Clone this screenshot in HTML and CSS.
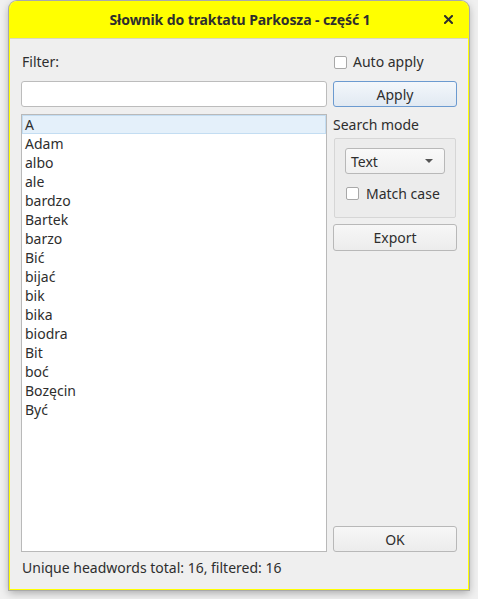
FILE: index.html
```html
<!DOCTYPE html>
<html lang="pl">
<head>
<meta charset="utf-8">
<title>Słownik do traktatu Parkosza - część 1</title>
<link rel="stylesheet" href="styles.css">
</head>
<body>
<div class="window">
  <div class="titlebar">
    <span class="title">Słownik do traktatu Parkosza - część 1</span>
    <span class="close"><svg width="9" height="9" viewBox="0 0 9 9"><path d="M1 1 L8 8 M8 1 L1 8" stroke="#2e2e2e" stroke-width="2" stroke-linecap="square"/></svg></span>
  </div>
  <div class="content">
    <div class="main">
      <div class="left">
        <div class="label-row">Filter:</div>
        <div class="input"></div>
        <div class="list">
          <div class="item selected">A</div>
          <div class="item">Adam</div>
          <div class="item">albo</div>
          <div class="item">ale</div>
          <div class="item">bardzo</div>
          <div class="item">Bartek</div>
          <div class="item">barzo</div>
          <div class="item">Bić</div>
          <div class="item">bijać</div>
          <div class="item">bik</div>
          <div class="item">bika</div>
          <div class="item">biodra</div>
          <div class="item">Bit</div>
          <div class="item">boć</div>
          <div class="item">Bozęcin</div>
          <div class="item">Być</div>
        </div>
      </div>
      <div class="right">
        <div class="label-row check-row"><span class="checkbox"></span>Auto apply</div>
        <div class="button apply">Apply</div>
        <div class="section-label">Search mode</div>
        <div class="group">
          <div class="combo"><span>Text</span><span class="arrow"></span></div>
          <div class="check-row group-check"><span class="checkbox"></span>Match case</div>
        </div>
        <div class="button export">Export</div>
        <div class="button ok">OK</div>
      </div>
    </div>
    <div class="status">Unique headwords total: 16, filtered: 16</div>
  </div>
</div>
</body>
</html>
```
FILE: styles.css
```css
* { box-sizing: border-box; }
html, body { margin: 0; padding: 0; }
body {
  width: 478px;
  height: 599px;
  background: #f0f0f0;
  font-family: "Noto Sans", "DejaVu Sans", sans-serif;
  font-size: 14px;
  color: #2e2e2e;
  overflow: hidden;
  padding-top: 1px;
  padding-left: 9px;
}
.window {
  width: 460px;
  height: 589px;
  background: #efefef;
  border: 1px solid #ffff00;
  border-top: none;
  border-radius: 8px 8px 0 0;
  box-shadow: 0 0 0 1px #a9a9a9, 0 3px 9px rgba(0,0,0,0.3);
  display: flex;
  flex-direction: column;
  overflow: hidden;
}
.titlebar {
  height: 38px;
  background: #ffff00;
  border-bottom: 1px solid #d8d8c0;
  display: flex;
  align-items: center;
  justify-content: center;
  position: relative;
  flex: none;
}
.title {
  font-weight: bold;
  font-size: 14px;
  color: #2e2e2e;
  margin-left: 2px;
  letter-spacing: -0.1px;
}
.close {
  position: absolute;
  right: 15px;
  top: 14px;
  width: 9px;
  height: 9px;
  display: flex;
}
.content {
  flex: 1;
  padding: 12px 10px 0 11px;
  display: flex;
  flex-direction: column;
}
.main {
  display: flex;
  gap: 6px;
}
.left {
  width: 306px;
  display: flex;
  flex-direction: column;
}
.right {
  width: 124px;
  display: flex;
  flex-direction: column;
}
.label-row {
  height: 22px;
  line-height: 22px;
  margin-bottom: 8px;
  padding-left: 1px;
}
.input {
  height: 26px;
  background: #fff;
  border: 1px solid #bcbcbc;
  border-radius: 3px;
}
.list {
  margin-top: 7px;
  height: 438px;
  background: #fff;
  border: 1px solid #b9b9b9;
  padding: 0;
}
.item {
  height: 19px;
  line-height: 19px;
  padding-left: 3px;
}
.item.selected {
  background: #e4f0fa;
  border: 1px solid #c3ddf2;
  line-height: 17px;
  padding-left: 2px;
}
.check-row {
  display: flex;
  align-items: center;
  gap: 6px;
}
.right .check-row { padding-left: 1px; }
.checkbox {
  width: 13px;
  height: 13px;
  background: #fff;
  border: 1px solid #a8a8a8;
  border-radius: 2px;
  flex: none;
}
.button {
  height: 26px;
  display: flex;
  align-items: center;
  justify-content: center;
  border: 1px solid #b8b8b8;
  border-radius: 3px;
  background: linear-gradient(#f7f7f7, #ececec);
}
.apply {
  border-color: #6b9ad0;
  background: linear-gradient(#f3f7fb, #e1e9f2);
}
.section-label {
  margin-top: 7px;
  height: 22px;
  line-height: 22px;
}
.group {
  margin-top: 2px;
  margin-left: 1px;
  width: 122px;
  height: 80px;
  border: 1px solid #d6d6d6;
  border-radius: 2px;
  padding: 9px 0 0 10px;
  background: #ececec;
}
.combo {
  width: 100px;
  height: 26px;
  background: linear-gradient(#f9f9f9, #f0f0f0);
  border: 1px solid #b8b8b8;
  border-radius: 3px;
  display: flex;
  align-items: center;
  justify-content: space-between;
  padding: 0 11px 0 5px;
}
.arrow {
  width: 0;
  height: 0;
  border-left: 4px solid transparent;
  border-right: 4px solid transparent;
  border-top: 4px solid #555;
}
.group-check {
  margin-top: 9px;
  height: 20px;
  gap: 7px;
}
.export {
  margin-top: 6px;
  height: 27px;
}
.ok {
  margin-top: auto;
}
.status {
  margin-top: 6px;
  height: 20px;
  line-height: 20px;
  padding-left: 1px;
}
```
